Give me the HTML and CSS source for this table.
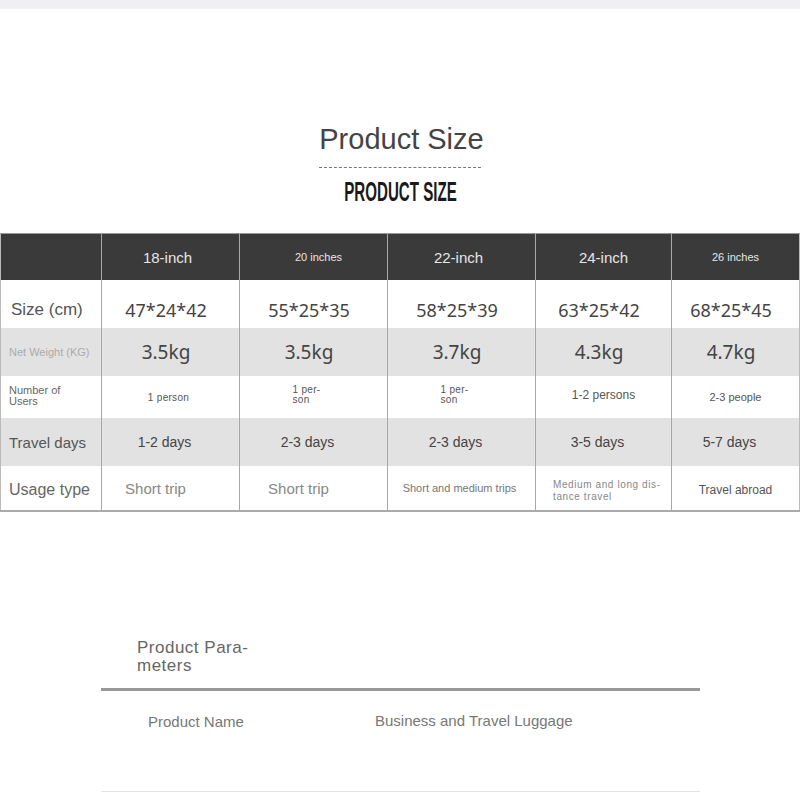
FILE: index.html
```html
<!DOCTYPE html>
<html>
<head>
<meta charset="utf-8">
<link rel="stylesheet" href="styles.css">
</head>
<body>
<div class="topband"></div>
<section class="size-head">
  <h1 class="title">Product Size</h1>
  <div class="dash"></div>
  <div class="subtitle"><span>PRODUCT SIZE</span></div>
</section>
<div class="size-table">
  <div class="row head">
    <div class="cell"></div>
    <div class="cell h-lg h1">18-inch</div>
    <div class="cell h-sm h2">20 inches</div>
    <div class="cell h-lg h3">22-inch</div>
    <div class="cell h-lg">24-inch</div>
    <div class="cell h-sm">26 inches</div>
  </div>
  <div class="row r-size">
    <div class="cell lab lab-size">Size (cm)</div>
    <div class="cell val">47*24*42</div>
    <div class="cell val">55*25*35</div>
    <div class="cell val">58*25*39</div>
    <div class="cell val">63*25*42</div>
    <div class="cell val">68*25*45</div>
  </div>
  <div class="row r-weight alt">
    <div class="cell lab lab-weight">Net Weight (KG)</div>
    <div class="cell val">3.5kg</div>
    <div class="cell val">3.5kg</div>
    <div class="cell val">3.7kg</div>
    <div class="cell val">4.3kg</div>
    <div class="cell val">4.7kg</div>
  </div>
  <div class="row r-users">
    <div class="cell lab lab-users">Number of<br>Users</div>
    <div class="cell u-a">1 person</div>
    <div class="cell"><span class="u-b">1 per-<br>son</span></div>
    <div class="cell"><span class="u-b">1 per-<br>son</span></div>
    <div class="cell u-c">1-2 persons</div>
    <div class="cell u-d">2-3 people</div>
  </div>
  <div class="row r-days alt">
    <div class="cell lab lab-days">Travel days</div>
    <div class="cell val">1-2 days</div>
    <div class="cell val">2-3 days</div>
    <div class="cell val">2-3 days</div>
    <div class="cell val">3-5 days</div>
    <div class="cell val">5-7 days</div>
  </div>
  <div class="row r-usage">
    <div class="cell lab lab-usage">Usage type</div>
    <div class="cell t-a">Short trip</div>
    <div class="cell t-a">Short trip</div>
    <div class="cell t-b">Short and medium trips</div>
    <div class="cell t-c"><span>Medium and long dis-<br>tance travel</span></div>
    <div class="cell t-d">Travel abroad</div>
  </div>
</div>
<section class="params">
  <h2 class="params-title">Product Para-<br>meters</h2>
  <div class="params-row">
    <span class="p-key">Product Name</span>
    <span class="p-val">Business and Travel Luggage</span>
  </div>
</section>
</body>
</html>
```

FILE: styles.css
```css
html, body {
  margin: 0;
  padding: 0;
  background: #fff;
  font-family: "Liberation Sans", Arial, sans-serif;
}
.topband {
  height: 9px;
  background: #f0f0f4;
}
.size-head {
  display: flex;
  flex-direction: column;
  align-items: center;
  padding-top: 114px;
  height: 110px;
}
.title {
  margin: 0;
  font-weight: normal;
  font-size: 29px;
  line-height: 32px;
  color: #444;
  padding-left: 3px;
}
.dash {
  width: 162px;
  margin-top: 12px;
  border-top: 1px dashed #777;
}
.subtitle {
  margin-top: 11px;
  height: 26px;
  display: flex;
  justify-content: center;
  width: 200px;
}
.subtitle span {
  display: inline-block;
  font-weight: bold;
  font-size: 27px;
  line-height: 26px;
  color: #1a1a1a;
  transform: scaleX(0.56);
  white-space: nowrap;
}

/* size table */
.size-table {
  width: 800px;
  border-top: 1px solid #9a9a9a;
  border-bottom: 2px solid #aaa;
}
.row {
  display: grid;
  grid-template-columns: 101px 138px 148px 148px 136px 129px;
  height: 48px;
}
.cell {
  box-sizing: border-box;
  border-left: 1px solid #a8a8a8;
  display: flex;
  align-items: center;
  justify-content: center;
  text-align: center;
  color: #444;
  white-space: nowrap;
}
.row > .cell:first-child { border-left-color: #bbb; }
.row > .cell:last-child { border-right: 1px solid #bbb; }
.alt { background: #e3e2e3; }

.head { height: 46px; background: #3a3a3a; }
.head .cell { color: #e6e6e6; }
.h-lg { font-size: 15px; }
.h-sm { font-size: 11px; }
.h1 { padding-right: 6px; }
.h2 { padding-left: 10px; }
.h3 { padding-right: 6px; }

.lab {
  justify-content: flex-start;
  text-align: left;
  padding-left: 8px;
}
.val { padding-right: 9px; }

.r-size .val {
  font-family: "Noto Sans", "Open Sans", sans-serif;
  font-size: 18px;
  padding-top: 12px;
}
.lab-size {
  font-size: 17px;
  color: #555;
  padding-left: 10px;
  padding-top: 12px;
}
.r-weight .val {
  font-family: "Noto Sans", "Open Sans", sans-serif;
  font-size: 19px;
}
.lab-weight {
  font-size: 11px;
  color: #aaa;
}

.r-users { height: 42px; }
.r-users .cell { font-size: 10px; color: #555; }
.lab-users {
  font-size: 11px !important;
  line-height: 11px;
  color: #666 !important;
  padding-bottom: 3px;
}
.u-a { letter-spacing: 0.3px; padding-right: 4px; }
.u-b {
  display: inline-block;
  text-align: left;
  line-height: 10px;
  margin-left: -14px;
  margin-top: -5px;
  letter-spacing: 0.3px;
}
.r-users .u-c { font-size: 12px; padding-bottom: 4px; }
.r-users .u-d { font-size: 11px; }

.r-days .val { font-size: 14px; padding-right: 12px; }
.lab-days { font-size: 15px; color: #555; }

.r-usage { height: 44px; }
.r-usage .cell { color: #888; }
.lab-usage { font-size: 16px; color: #666 !important; padding-top: 3px; }
.t-a { font-size: 15px; padding-right: 30px; }
.r-usage .t-b { font-size: 11px; color: #777; padding-right: 4px; }
.t-c {
  justify-content: flex-start;
  padding-left: 17px;
  padding-top: 5px;
}
.t-c span {
  display: inline-block;
  text-align: left;
  font-size: 10px;
  line-height: 12px;
  letter-spacing: 0.6px;
}
.r-usage .t-d { font-size: 12px; color: #555; padding-top: 3px; }

/* parameters */
.params {
  margin: 127px 100px 0 101px;
}
.params-title {
  margin: 0 0 0 36px;
  font-weight: normal;
  font-size: 17px;
  line-height: 18px;
  letter-spacing: 0.5px;
  color: #666;
  padding-bottom: 13px;
}
.params-row {
  border-top: 3px solid #999;
  border-bottom: 1px solid #e2e2e2;
  height: 104px;
  box-sizing: border-box;
  display: flex;
  align-items: flex-start;
  padding-top: 21px;
}
.p-key {
  margin-left: 47px;
  width: 227px;
  font-size: 15px;
  color: #777;
  padding-top: 1px;
}
.p-val {
  font-size: 15px;
  color: #777;
}
```
